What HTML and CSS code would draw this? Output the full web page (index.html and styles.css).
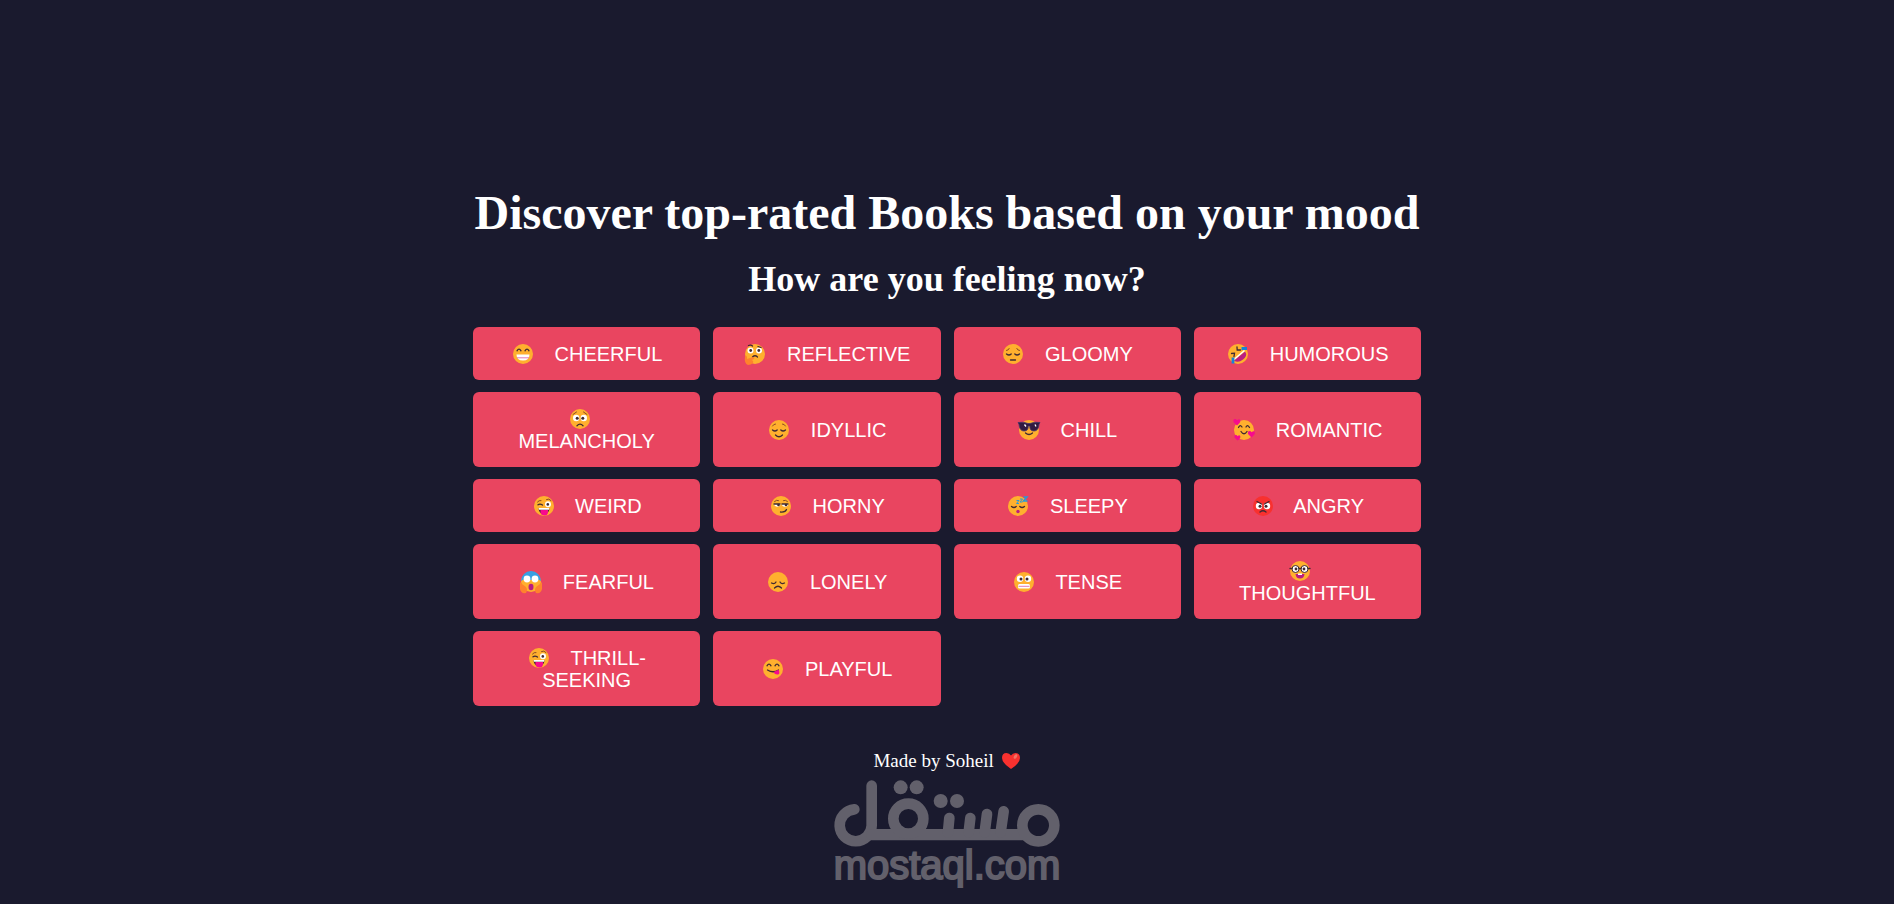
FILE: index.html
```html
<!DOCTYPE html>
<html lang="en">
<head>
    <meta charset="UTF-8">
    <meta name="viewport" content="width=device-width, initial-scale=1.0">
    <title>Discover top-rated Books based on your mood</title>
    <link rel="stylesheet" href="styles.css">
</head>
<body>
    <main class="container">
        <h1>Discover top-rated Books based on your mood</h1>
        <h2>How are you feeling now?</h2>
        <div class="moods">
            <button class="mood-btn" type="button"><svg class="emoji" viewBox="-12 -12 24 24" aria-hidden="true">
                <circle class="face" r="10"/>
                <path class="line" d="M-6-3.200Q-4-6.500-2-3.200M2-3.200Q4-6.500 6-3.200"/>
                <path fill="#fff" d="M-6.500 0.500H6.500Q6.500 6.500 0 6.500T-6.500 0.500Z"/>
                <path stroke="#d957a3" stroke-width=".8" d="M-6 3.800H6"/>
            </svg> Cheerful</button>
            <button class="mood-btn" type="button"><svg class="emoji" viewBox="-12 -12 24 24" aria-hidden="true">
                <circle class="face" r="10"/>
                <circle class="eye" cx="-4.500" cy="-3.500" r="3"/><circle class="eye" cx="4" cy="-3.500" r="3"/>
                <circle class="dark" cx="-4.300" cy="-3.500" r="1.400"/><circle class="dark" cx="3.800" cy="-3.500" r="1.400"/>
                <path class="line" d="M-6.500-8.500Q-4-9.500-2.500-8M3-7.500L6-6.500M-2.500 3Q0 .5 2.500 3"/>
                <path fill="#ff822d" d="M-10 2Q-9 1-8 3V5L-2 3Q0 3-1 5L-3 6Q-1 7-2 9Q-4 11-7 11Q-11 10-10 2Z"/>
            </svg> Reflective</button>
            <button class="mood-btn" type="button"><svg class="emoji" viewBox="-12 -12 24 24" aria-hidden="true">
                <circle class="face" r="10"/>
                <path class="line" d="M-6.500 0Q-4 2-1.800 0M1.800 0Q4 2 6.500 0M-2.500 6H2.500"/>
                <path class="brow" d="M-6.500-3.500Q-4.500-3.500-3.800-5.500M6.500-3.500Q4.500-3.500 3.800-5.500"/>
            </svg> Gloomy</button>
            <button class="mood-btn" type="button"><svg class="emoji" viewBox="-12 -12 24 24" aria-hidden="true">
                <circle class="face" r="10"/>
                <path class="line" d="M-6.500-.5L-3.500-.8L-4 2.500M-1-7L-.8-4H2.500"/>
                <path fill="#bb1d80" d="M7-2.500L-4 6.500Q0 9.500 5 5.500T7-2.500Z"/>
                <path stroke="#fff" stroke-width="1.500" d="M6.500-3.500L-4 5.500"/>
                <path stroke="#1683d8" stroke-width="2.800" d="M3.500-5.500H9M-5 3.500V9.500"/>
            </svg> Humorous</button>
            <button class="mood-btn" type="button"><svg class="emoji" viewBox="-12 -12 24 24" aria-hidden="true">
                <circle class="face" r="10"/>
                <circle class="eye" cx="-3.800" cy="-1" r="3.200"/><circle class="eye" cx="3.800" cy="-1" r="3.200"/>
                <circle class="dark" cx="-2.800" cy="-.8" r="1.500"/><circle class="dark" cx="2.800" cy="-.8" r="1.500"/>
                <path class="brow" d="M-7-4.500L-3.500-7M7-4.500L3.500-7"/>
                <path class="line" d="M-3 6.800Q0 3.500 3 6.800"/>
            </svg> Melancholy</button>
            <button class="mood-btn" type="button"><svg class="emoji" viewBox="-12 -12 24 24" aria-hidden="true">
                <circle class="face" r="10"/>
                <path class="line" d="M-6.500 0Q-4 2-1.800 0M1.800 0Q4 2 6.500 0M-3.500 5Q0 8.500 3.500 5"/>
                <path class="brow" d="M-6.500-4Q-5.500-6-3.500-6M6.500-4Q5.500-6 3.500-6"/>
            </svg> Idyllic</button>
            <button class="mood-btn" type="button"><svg class="emoji" viewBox="-12 -12 24 24" aria-hidden="true">
                <circle class="face" r="10"/>
                <path fill="#321b41" stroke="#483669" stroke-width=".8" d="M-11-7.500Q-6-8.500-1-6.500H1Q6-8.500 11-7.500L10-5.500Q9.500 1 5 1T.8-4H-.8Q-.5 1-5 1T-10-5.500Z"/>
                <path stroke="#fff" stroke-width="1.300" d="M-4.500-5.500L-3-3.500M6-5.500L7-3.500"/>
                <path class="line" d="M-3.500 3Q0 6 3.500 3"/>
            </svg> Chill</button>
            <button class="mood-btn" type="button"><svg class="emoji" viewBox="-12 -12 24 24" aria-hidden="true">
                <circle class="face" r="10"/>
                <path class="line" d="M-5.500-2.500Q-4-6-2-3M2-3Q3.500-6 5.500-2.500M-3 1.500Q0 6 3 1.500"/>
                <path class="pink" d="M-7-4.500L-10.500-8Q-11-11-9-11Q-7.500-11-7-9.800Q-4-12-3.500-9Q-4-6.500-7-4.500ZM7.500 7.500L4 4Q3.500 1 5.500 1Q7 1 7.500 2.200Q10.500 0 11 3Q10.500 5.500 7.500 7.500ZM-6.500 10.500L-9.500 7.500Q-10 5-8 5Q-7 5-6.500 6.200Q-4 4-3.500 7Q-4 9-6.500 10.500Z"/>
            </svg> Romantic</button>
            <button class="mood-btn" type="button"><svg class="emoji" viewBox="-12 -12 24 24" aria-hidden="true">
                <circle class="face" r="10"/>
                <path class="line" d="M-6-1.200Q-4-2.800-1.500-1"/>
                <path class="brow" d="M-6.500-4Q-5-6-3-5.500M2.500-6.500Q5-8 7-5.500"/>
                <circle class="eye" cx="4" cy="-1.800" r="3"/><circle class="dark" cx="3.800" cy="-1.600" r="1.300"/>
                <path class="dark" d="M-5.500 2H5.500Q5 8 0 8T-5.500 2Z"/>
                <path fill="#fff" d="M-5.500 2H5.500L5 3.800H-5Z"/><path class="pink" d="M-3.500 4H4V7Q3 10 0 9.500T-3.500 7Z"/>
            </svg> Weird</button>
            <button class="mood-btn" type="button"><svg class="emoji" viewBox="-12 -12 24 24" aria-hidden="true">
                <circle class="face" r="10"/>
                <path class="eye" d="M-7-2H-.5Q-1 .8-3.700.8T-7-2ZM.8-2H7.300Q7 .8 4 .8T.8-2Z"/>
                <path class="line" d="M-7-2H-1M1-2H7M-.5 6Q4.500 6.500 5.500 3.500"/>
                <path class="brow" d="M-6.500-4.500Q-4.500-6.500-2.500-5.500M2.500-5.500Q4.500-6.500 6.500-4.500"/>
                <circle class="dark" cx="-2.500" cy="-1" r="1.300"/><circle class="dark" cx="5" cy="-1" r="1.300"/>
            </svg> Horny</button>
            <button class="mood-btn" type="button"><svg class="emoji" viewBox="-12 -12 24 24" aria-hidden="true">
                <circle class="face" r="10"/>
                <path class="line" d="M-6.500 .5Q-4 2.500-1.800 .5M1.800 .5Q4 2.500 6.500 .5"/>
                <circle cy="5.500" r="1.700" fill="#bb1d80"/>
                <path fill="none" stroke="#269bdc" stroke-width="1" d="M-1.500-5.500H1L-1.500-2.500H1M2-7H4.500L2-4H4.500"/>
                <path fill="none" stroke="#269bdc" stroke-width="1.500" d="M5.500-9H9L5.500-5H9.500"/>
            </svg> Sleepy</button>
            <button class="mood-btn" type="button"><svg class="emoji" viewBox="-12 -12 24 24" aria-hidden="true">
                <circle class="face angry" r="10"/>
                <circle class="eye" cx="-4" cy="0" r="3.200"/><circle class="eye" cx="4" cy="0" r="3.200"/>
                <circle class="dark" cx="-3" cy=".2" r="1.500"/><circle class="dark" cx="3" cy=".2" r="1.500"/>
                <path class="line" d="M-6-4.500L-1.500-2M6-4.500L1.500-2M-3 6Q0 3.500 3 6"/>
            </svg> Angry</button>
            <button class="mood-btn" type="button"><svg class="emoji" viewBox="-12 -12 24 24" aria-hidden="true">
                <circle class="face" r="10"/>
                <path fill="#379fe3" d="M-10-1A10 10 0 0 1 10-1Q7-4 0-2Q-7-4-10-1Z"/>
                <circle class="eye" cx="-4" cy="-3" r="3.400"/><circle class="eye" cx="4" cy="-3" r="3.400"/>
                <ellipse cx="0" cy="5" rx="2.500" ry="3.300" fill="#bb1d80"/>
                <path fill="#ff822d" d="M-11 1Q-10-1-9 2L-5 5Q-3 8-5 11Q-10 12-11 7ZM11 1Q10-1 9 2L5 5Q3 8 5 11Q10 12 11 7Z"/>
            </svg> Fearful</button>
            <button class="mood-btn" type="button"><svg class="emoji" viewBox="-12 -12 24 24" aria-hidden="true">
                <circle class="face" r="10"/>
                <path class="line" d="M-6.500 1Q-3.500 2.500-2 0M2 0Q3.500 2.500 6.500 1M-3.500 6Q0 2.500 3.500 6"/>
            </svg> Lonely</button>
            <button class="mood-btn" type="button"><svg class="emoji" viewBox="-12 -12 24 24" aria-hidden="true">
                <circle class="face" r="10"/>
                <circle class="eye" cx="-4" cy="-3.200" r="3.200"/><circle class="eye" cx="4" cy="-3.200" r="3.200"/>
                <circle class="dark" cx="-3" cy="-3" r="1.500"/><circle class="dark" cx="3" cy="-3" r="1.500"/>
                <rect x="-6" y="2" width="12" height="4.500" rx="1.500" fill="#fff"/>
                <path stroke="#d957a3" stroke-width=".8" d="M-5.500 4.300H5.500"/>
            </svg> Tense</button>
            <button class="mood-btn" type="button"><svg class="emoji" viewBox="-12 -12 24 24" aria-hidden="true">
                <circle class="face" r="10"/>
                <circle class="eye rim" cx="-4.500" cy="-2" r="3.500"/><circle class="eye rim" cx="4.500" cy="-2" r="3.500"/>
                <circle class="dark" cx="-4" cy="-2" r="1.400"/><circle class="dark" cx="4" cy="-2" r="1.400"/>
                <path class="line" d="M-10-2.500H-8M-1-2.500H1M8-2.500H10"/>
                <path fill="#bb1d80" d="M-4.500 3H4.500Q4 7.500 0 7.500T-4.500 3Z"/><path fill="#fff" d="M-2 2.500H2V4H-2Z"/>
            </svg> Thoughtful</button>
            <button class="mood-btn" type="button"><svg class="emoji" viewBox="-12 -12 24 24" aria-hidden="true">
                <circle class="face" r="10"/>
                <path class="line" d="M-6-1.200Q-4-2.800-1.500-1"/>
                <path class="brow" d="M-6.500-4Q-5-6-3-5.500M2.500-6.500Q5-8 7-5.500"/>
                <circle class="eye" cx="4" cy="-1.800" r="3"/><circle class="dark" cx="3.800" cy="-1.600" r="1.300"/>
                <path class="dark" d="M-5.500 2H5.500Q5 8 0 8T-5.500 2Z"/>
                <path fill="#fff" d="M-5.500 2H5.500L5 3.800H-5Z"/><path class="pink" d="M-3.500 4H4V7Q3 10 0 9.500T-3.500 7Z"/>
            </svg> Thrill-Seeking</button>
            <button class="mood-btn" type="button"><svg class="emoji" viewBox="-12 -12 24 24" aria-hidden="true">
                <circle class="face" r="10"/>
                <path class="line" d="M-6-3.200Q-4-6.500-2-3.200M2-3.200Q4-6.500 6-3.200M-5.500 1Q0 4.500 5.500 1"/>
                <path class="pink" d="M.5 3L5.500 .8Q7.500 5 5 5.500Q2 6 .5 3Z"/>
            </svg> Playful</button>
        </div>
    </main>
    <footer class="footer">
        <p class="credit">Made by Soheil <svg class="heart" viewBox="0 0 20 18" role="img" aria-label="love"><path fill="#f8312f" d="M10 17Q1 11 1 6Q1 1 5.500 1Q8.500 1 10 3.500Q11.500 1 14.500 1Q19 1 19 6Q19 11 10 17Z"/><ellipse cx="14.500" cy="4.500" rx="1.500" ry="2.500" fill="#f37366" transform="rotate(30 14.500 4.500)"/></svg></p>
        <svg class="brand-mark" viewBox="36 120 690 210" role="img" aria-label="مستقل">
            <g fill="none" stroke="currentColor" stroke-width="32" stroke-linecap="round">
                <path d="M103 211A48 48 0 1 0 155 260V140"/>
                <path d="M155 287H607" stroke-width="34"/>
                <circle cx="265" cy="239" r="45"/>
                <circle cx="655" cy="259" r="48"/>
                <path d="M388 237L384 280M451 237L446 280M501 225L494 280M551 217L542 280"/>
            </g>
            <g fill="currentColor">
                <circle cx="242" cy="145" r="21"/>
                <circle cx="290" cy="145" r="21"/>
                <circle cx="362" cy="186" r="21"/>
                <circle cx="411" cy="186" r="21"/>
            </g>
        </svg>
        <span class="brand-name">mostaql.com</span>
    </footer>
</body>
</html>
```
FILE: styles.css
```css
* {
    box-sizing: border-box;
}
body {
    margin: 0;
    padding: 188px 16px 16px;
    background: #1a1a2e;
    color: #fff;
    font-family: Georgia, "Liberation Serif", serif;
    text-align: center;
}
.container {
    max-width: 948px;
    margin: 0 auto;
}
h1 {
    margin: 0 0 22px;
    font-size: 48px;
    line-height: 50px;
}
h2 {
    margin: 0 0 29px;
    font-size: 36px;
    line-height: 38px;
}
.moods {
    display: grid;
    grid-template-columns: repeat(4, 1fr);
    gap: 12px 13px;
}
.mood-btn {
    padding: 16px 28px 15px;
    border: none;
    border-radius: 6px;
    background: #e94560;
    color: #fff;
    font-family: Arial, "Liberation Sans", sans-serif;
    font-size: 20px;
    line-height: 22px;
    text-transform: uppercase;
    cursor: pointer;
}
.mood-btn:hover {
    background: #d13a54;
}

/* emoji */
.emoji {
    width: 24px;
    height: 24px;
    margin: -4px 14px -4px 0;
    vertical-align: -1px;
}
.face {
    fill: #ffb02e;
}
.angry {
    fill: #f8312f;
}
.eye {
    fill: #fff;
}
.rim {
    stroke: #402a32;
    stroke-width: 1;
}
.dark {
    fill: #402a32;
}
.pink {
    fill: #f70a8d;
}
.line,
.brow {
    fill: none;
    stroke: #402a32;
    stroke-width: 1.3;
    stroke-linecap: round;
}
.brow {
    stroke: #8a4b23;
    stroke-width: 1;
}

.footer {
    display: flex;
    flex-direction: column;
    align-items: center;
    margin-top: 43px;
}
.credit {
    margin: 0 0 6px;
    font-size: 19px;
    line-height: 24px;
}
.heart {
    width: 20px;
    height: 18px;
    margin-left: 2px;
    vertical-align: -3px;
}
.brand-mark {
    width: 230px;
    height: 70px;
    color: #62606b;
}
.brand-name {
    color: #62606b;
    font-family: Arial, "Liberation Sans", sans-serif;
    font-size: 40px;
    line-height: 32px;
    -webkit-text-stroke: 2px #62606b;
}
```
